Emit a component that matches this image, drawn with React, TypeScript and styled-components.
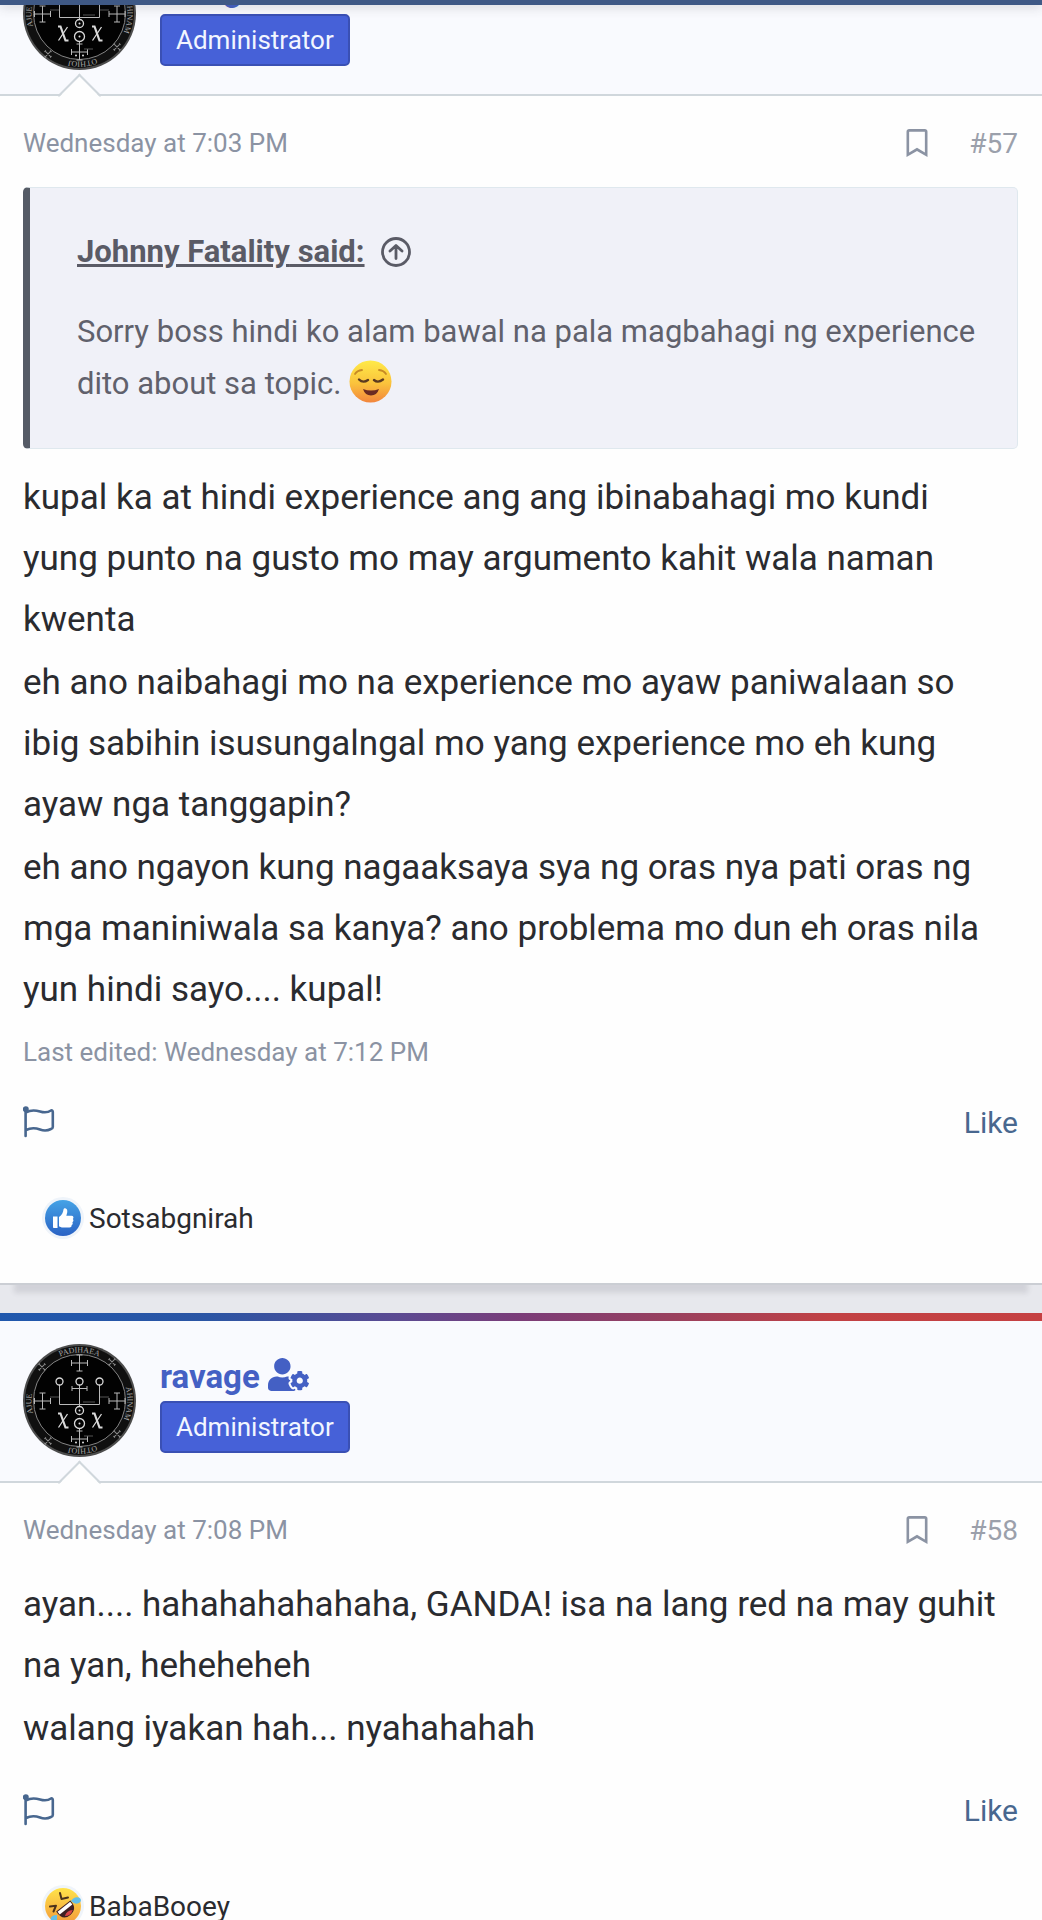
import React from "react";
import styled, { createGlobalStyle } from "styled-components";
import { FaRegBookmark, FaUserCog } from "react-icons/fa";

const GlobalStyle = createGlobalStyle`
  *, *::before, *::after { box-sizing: border-box; }
  body { margin: 0; background: #e7e8ed; }
`;

const Screen = styled.div`
  height: 100vh;
  overflow: hidden;
  color: #2a2b2f;
  font-family: Roboto, "Liberation Sans", sans-serif;
  font-size: 26px;
`;

const StickyBar = styled.header`
  position: fixed;
  inset: 0 0 auto;
  z-index: 2;
  height: 5px;
  background: #3f5986;
  box-shadow: 0 1px 12px rgba(60, 60, 70, 0.3);
`;

/* The thread is scrolled so that the first post starts above the window. */
const Thread = styled.main`
  display: flex;
  flex-direction: column;
  gap: 28px;
  margin-top: -74px;
`;

const Post = styled.article`
  border-bottom: 2px solid #cbced4;
  background: #fefefe;
  box-shadow: 0 22px 5px -14px rgba(60, 60, 75, 0.12);
`;

const PostHeader = styled.div`
  display: flex;
  gap: 24px;
  padding: 31px 23px 24px;
  border-bottom: 2px solid #d0d7dc;
  background:
    linear-gradient(90deg, #2058ad 0, #2b55a4 20%, #5b4a92 38%, #7b3c78 50%, #98405f 64%, #c24144 80%, #c54042 100%) top / 100% 8px no-repeat,
    #f9fafe;
`;

const AvatarLink = styled.a`
  position: relative;
  display: block;
  height: 113px;
  &::after {
    content: "";
    position: absolute;
    left: 41px;
    bottom: -41px;
    width: 31px;
    height: 31px;
    transform: rotate(45deg);
    border: solid #d0d7dc;
    border-width: 2px 0 0 2px;
    background: linear-gradient(135deg, #fefefe 50%, transparent 50%);
  }
`;

const UserColumn = styled.div`
  display: flex;
  flex-direction: column;
  align-items: flex-start;
  padding-top: 9px;
`;

const UserName = styled.a`
  display: flex;
  align-items: center;
  gap: 8px;
  height: 48px;
  padding-bottom: 2px;
  color: #4460c4;
  font-size: 33px;
  font-weight: 700;
  text-decoration: none;
  svg { margin-bottom: 3px; }
`;

const Badge = styled.strong`
  padding: 0 14px;
  border: 2px solid #3a50b4;
  border-radius: 5px;
  background: #4661d8;
  color: #f2f6ff;
  font-weight: 400;
  line-height: 48px;
`;

const PostBody = styled.div`
  padding: 27px 24px 43px 23px;
`;

const MetaRow = styled.div`
  display: flex;
  align-items: center;
  justify-content: space-between;
  height: 40px;
  margin-bottom: 24px;
  color: #8b93a3;
`;

const MetaLink = styled.a`
  color: inherit;
  text-decoration: none;
`;

const PostNumber = styled(MetaLink)`
  color: #9ba0ab;
  font-size: 28px;
`;

const MetaTools = styled.div`
  display: flex;
  align-items: center;
  gap: 38px;
`;

const IconButton = styled.button`
  display: flex;
  padding: 0;
  border: 0;
  background: none;
  color: inherit;
`;

const Quote = styled.blockquote`
  margin: 0 0 18px;
  padding: 38px 40px 38px 47px;
  border: 1px solid #dfe8ee;
  border-left: 7px solid #555b66;
  border-radius: 5px;
  background: #f0f1f8;
  color: #60616c;
  font-size: 31px;
  line-height: 52px;
`;

const QuoteSource = styled.a`
  display: flex;
  align-items: center;
  gap: 16px;
  margin-bottom: 28px;
  color: #5a5b66;
  font-weight: 700;
`;

const QuoteText = styled.p`
  margin: 0;
  svg { vertical-align: -9px; }
`;

const Message = styled.div`
  display: flex;
  flex-direction: column;
  gap: 2px;
  padding-right: 10px;
  font-size: 35px;
  line-height: 61px;
  p { margin: 0; }
`;

const EditedNote = styled.div`
  color: #8b93a3;
  line-height: 38px;
  padding-top: 13px;
`;

const ActionBar = styled.div`
  display: flex;
  align-items: center;
  justify-content: space-between;
  height: 40px;
  margin-top: 31px;
  color: #48678f;
`;

const LikeLink = styled.a`
  color: inherit;
  font-size: 30px;
  text-decoration: none;
`;

const Reactions = styled.div`
  display: flex;
  align-items: center;
  gap: 8px;
  height: 44px;
  margin-top: 54px;
  padding-left: 22px;
`;

const ReactionIcon = styled.span`
  display: flex;
  border-radius: 50%;
  box-shadow: 0 0 0 3px #eff4fa;
`;

const ReactionUser = styled.a`
  color: #2a2b2f;
  text-decoration: none;
  font-size: 28px;
`;

const RingText = styled.text`
  fill: #a9a9a9;
  font-family: "Liberation Serif", serif;
  font-size: 8px;
  text-anchor: middle;
`;

function Cross({ x, y, turn = 0, size = 8 }: { x: number; y: number; turn?: number; size?: number }) {
  const s = size;
  const e = size > 5 ? 3 : 1;
  return (
    <path
      transform={`translate(${x} ${y}) rotate(${turn})`}
      d={`M0 ${-s}V${s}M${-s} 0H${s}M${-e} ${-s}H${e}M${-e} ${s}H${e}M${-s} ${-e}V${e}M${s} ${-e}V${e}`}
    />
  );
}

function Avatar() {
  const id = React.useId();
  return (
    <svg width="113" height="113" viewBox="0 0 113 113" role="img" aria-label="ravage">
      <defs>
        <path id={`${id}a`} d="M56.500 104.500A48 48 0 0 1 56.500 8.500A48 48 0 0 1 56.500 104.500" />
        <path id={`${id}b`} d="M56.500 8.500A48 48 0 0 1 56.500 104.500A48 48 0 0 1 56.500 8.500" />
      </defs>
      <circle cx="56.500" cy="56.500" r="56.500" fill="#4c4c4c" />
      <circle cx="56.500" cy="56.500" r="54.500" fill="#101010" />
      <circle cx="56.500" cy="56.500" r="46" fill="#020202" stroke="#858585" strokeWidth="1" />
      <g fill="none" stroke="#b9b9b9" strokeWidth="1">
        <Cross x={56.500} y={19} />
        <Cross x={19.500} y={57} />
        <Cross x={94} y={57} />
        <Cross x={56.500} y={95} />
        <path d="M36.500 41V60.500H76.500V41M56.500 41V62M49 44.500H64M49 42V47M64 42V47M56.500 84V95" />
        <path d="M27 53H36M77 53H86M60 58H72M61 92H70" stroke="#555" />
      </g>
      <g fill="none" stroke="#8a8a8a" strokeWidth="1">
        <Cross x={19} y={23} turn={45} size={4} />
        <Cross x={89} y={18} turn={45} size={4} />
        <Cross x={25} y={97} turn={45} size={4} />
        <Cross x={94} y={90} turn={45} size={4} />
      </g>
      <g fill="none" stroke="#d9d9d9" strokeWidth="1.300">
        <circle cx="36.500" cy="37.500" r="3.500" />
        <circle cx="56.500" cy="37.500" r="3.500" />
        <circle cx="76.500" cy="37.500" r="3.500" />
        <circle cx="56.500" cy="66.500" r="4" />
        <circle cx="56.500" cy="79.500" r="5" />
        <path d="M35 69.500H37.500L42.500 83.500H45.500M69 69.500H71.500L76.500 83.500H79.500" strokeWidth="2.200" />
        <path d="M44.500 70L35.500 83.500M78.500 70L69.500 83.500" />
      </g>
      <g fill="#ddd">
        <circle cx="56.500" cy="66.500" r="1" />
        <circle cx="56.500" cy="79.500" r="1" />
        <circle cx="53" cy="98.500" r="1" />
        <circle cx="60" cy="98.500" r="1" />
      </g>
      <g aria-hidden="true">
        <RingText><textPath href={`#${id}a`} startOffset="24%">AJUE</textPath></RingText>
        <RingText><textPath href={`#${id}a`} startOffset="50%">PADIHAEA</textPath></RingText>
        <RingText><textPath href={`#${id}a`} startOffset="76%">AHINAM</textPath></RingText>
        <RingText><textPath href={`#${id}b`} startOffset="49%">OTHIOJ</textPath></RingText>
      </g>
    </svg>
  );
}

function FlagIcon() {
  return (
    <svg width="32" height="32" viewBox="0 0 32 32" fill="none" stroke="currentColor" strokeWidth="2.600" strokeLinecap="round" strokeLinejoin="round" aria-hidden="true">
      <circle cx="2.800" cy="3.200" r="1.700" fill="currentColor" />
      <path d="M2.600 4V30M3 6.500C8 3.500 12 4 17 5.500S25 6.500 28 4.500Q29.800 4 29.800 6V21Q29.800 22.500 28 23C24 25 21 25 17 23.500S8 21.500 3 24" />
    </svg>
  );
}

function ArrowCircle() {
  return (
    <svg width="30" height="30" viewBox="0 0 30 30" fill="none" stroke="currentColor" strokeWidth="2.800" strokeLinecap="round" strokeLinejoin="round" aria-hidden="true">
      <circle cx="15" cy="15" r="13.500" />
      <path d="M15 21.500V9M9 14L15 8.500L21 14" />
    </svg>
  );
}

function RelievedFace() {
  return (
    <svg width="43" height="43" viewBox="0 0 43 43" role="img" aria-label="Relieved face">
      <defs>
        <linearGradient id="relieved" x1="0" y1="0" x2="0" y2="1">
          <stop offset="0" stopColor="#ffea48" />
          <stop offset="0.550" stopColor="#fac23c" />
          <stop offset="1" stopColor="#f2853d" />
        </linearGradient>
      </defs>
      <circle cx="21.500" cy="21.500" r="21" fill="url(#relieved)" />
      <g fill="none" strokeLinecap="round">
        <path d="M6 14Q8 10.500 13 10M30 10Q35 10.500 37 14" stroke="#c78a24" strokeWidth="1.800" />
        <path d="M10 19.500Q14 23.500 19 20M25 20Q29 23.500 34 19.500" stroke="#5b3a20" strokeWidth="2.400" />
      </g>
      <path d="M14 29Q22 32 30 29Q28 35.500 22 35.500T14 29Z" fill="#6a2a22" />
    </svg>
  );
}

function ThumbIcon() {
  return (
    <svg width="36" height="36" viewBox="0 0 36 36" role="img" aria-label="Like">
      <defs>
        <linearGradient id="thumb" x1="0" y1="0" x2="0" y2="1">
          <stop offset="0" stopColor="#45a3e6" />
          <stop offset="1" stopColor="#2a62c4" />
        </linearGradient>
      </defs>
      <circle cx="18" cy="18" r="18" fill="url(#thumb)" />
      <path fill="#fff" d="M8 16.500h4.500V28H8.800Q8 28 8 27zM14 17c3-2 4-4 4.500-7.500.3-2 3.800-1.800 3.800 1.500 0 2-.6 3.300-1 4.800h5.200c2 0 2.600 2.200 1.300 3.200 1 1 .8 2.600-.4 3.200.7 1.200.2 2.500-.8 2.900.3 1.600-.6 2.500-2.100 2.500H18c-2 0-2.800-.8-4-1.300z" />
    </svg>
  );
}

function LaughFace() {
  return (
    <svg width="36" height="36" viewBox="0 0 36 36" role="img" aria-label="Haha">
      <defs>
        <linearGradient id="laugh" x1="0" y1="0" x2="0" y2="1">
          <stop offset="0" stopColor="#ffe34a" />
          <stop offset="1" stopColor="#f39a3a" />
        </linearGradient>
      </defs>
      <circle cx="18" cy="18" r="18" fill="url(#laugh)" />
      <path d="M15 5L16.500 11L23 9.500M5 18.500L11 17.700L8.500 23.500" fill="none" stroke="#4a321c" strokeWidth="2" strokeLinecap="round" strokeLinejoin="round" />
      <g transform="translate(19.500 19.500) rotate(-38)">
        <path d="M-9 -2H9Q10 9 0 9.500T-9 -2Z" fill="#3f2023" />
        <path d="M-8 -1H8V2.500H-8Z" fill="#fff" />
        <path d="M-5 7Q0 3.500 5 7Q0 10.500 -5 7Z" fill="#d8434a" />
      </g>
      <path d="M26 13Q29 8 34 9.500Q38 12 34 15Q30 17 26 13ZM12 27Q6 27 5.500 31Q9 37 12 33Z" fill="#63bfe9" />
    </svg>
  );
}

type PostProps = {
  number: number;
  time: string;
  paragraphs: string[];
  quote?: { author: string; text: string };
  edited?: string;
  reaction: React.ReactNode;
  reactedBy: string;
};

function ThreadPost({ number, time, paragraphs, quote, edited, reaction, reactedBy }: PostProps) {
  return (
    <Post>
      <PostHeader>
        <AvatarLink href="#ravage"><Avatar /></AvatarLink>
        <UserColumn>
          <UserName href="#ravage">ravage <FaUserCog size={41} aria-hidden="true" /></UserName>
          <Badge>Administrator</Badge>
        </UserColumn>
      </PostHeader>
      <PostBody>
        <MetaRow>
          <MetaLink href={`#post-${number}`}><time>{time}</time></MetaLink>
          <MetaTools>
            <IconButton type="button" aria-label="Bookmark"><FaRegBookmark size={28} /></IconButton>
            <PostNumber href={`#post-${number}`}>#{number}</PostNumber>
          </MetaTools>
        </MetaRow>
        {quote && (
          <Quote>
            <QuoteSource href="#quoted">{quote.author} said: <ArrowCircle /></QuoteSource>
            <QuoteText>{quote.text} <RelievedFace /></QuoteText>
          </Quote>
        )}
        <Message>
          {paragraphs.map((text) => <p key={text}>{text}</p>)}
        </Message>
        {edited && <EditedNote>Last edited: <time>{edited}</time></EditedNote>}
        <ActionBar>
          <IconButton type="button" aria-label="Report"><FlagIcon /></IconButton>
          <LikeLink href="#like">Like</LikeLink>
        </ActionBar>
        <Reactions>
          <ReactionIcon>{reaction}</ReactionIcon>
          <ReactionUser href="#reactions">{reactedBy}</ReactionUser>
        </Reactions>
      </PostBody>
    </Post>
  );
}

export default function App() {
  return (
    <Screen>
      <GlobalStyle />
      <StickyBar />
      <Thread>
        <ThreadPost
          number={57}
          time="Wednesday at 7:03 PM"
          quote={{
            author: "Johnny Fatality",
            text: "Sorry boss hindi ko alam bawal na pala magbahagi ng experience dito about sa topic.",
          }}
          paragraphs={[
            "kupal ka at hindi experience ang ang ibinabahagi mo kundi yung punto na gusto mo may argumento kahit wala naman kwenta",
            "eh ano naibahagi mo na experience mo ayaw paniwalaan so ibig sabihin isusungalngal mo yang experience mo eh kung ayaw nga tanggapin?",
            "eh ano ngayon kung nagaaksaya sya ng oras nya pati oras ng mga maniniwala sa kanya? ano problema mo dun eh oras nila yun hindi sayo.... kupal!",
          ]}
          edited="Wednesday at 7:12 PM"
          reaction={<ThumbIcon />}
          reactedBy="Sotsabgnirah"
        />
        <ThreadPost
          number={58}
          time="Wednesday at 7:08 PM"
          paragraphs={[
            "ayan.... hahahahahahaha, GANDA! isa na lang red na may guhit na yan, heheheheh",
            "walang iyakan hah... nyahahahah",
          ]}
          reaction={<LaughFace />}
          reactedBy="BabaBooey"
        />
      </Thread>
    </Screen>
  );
}
